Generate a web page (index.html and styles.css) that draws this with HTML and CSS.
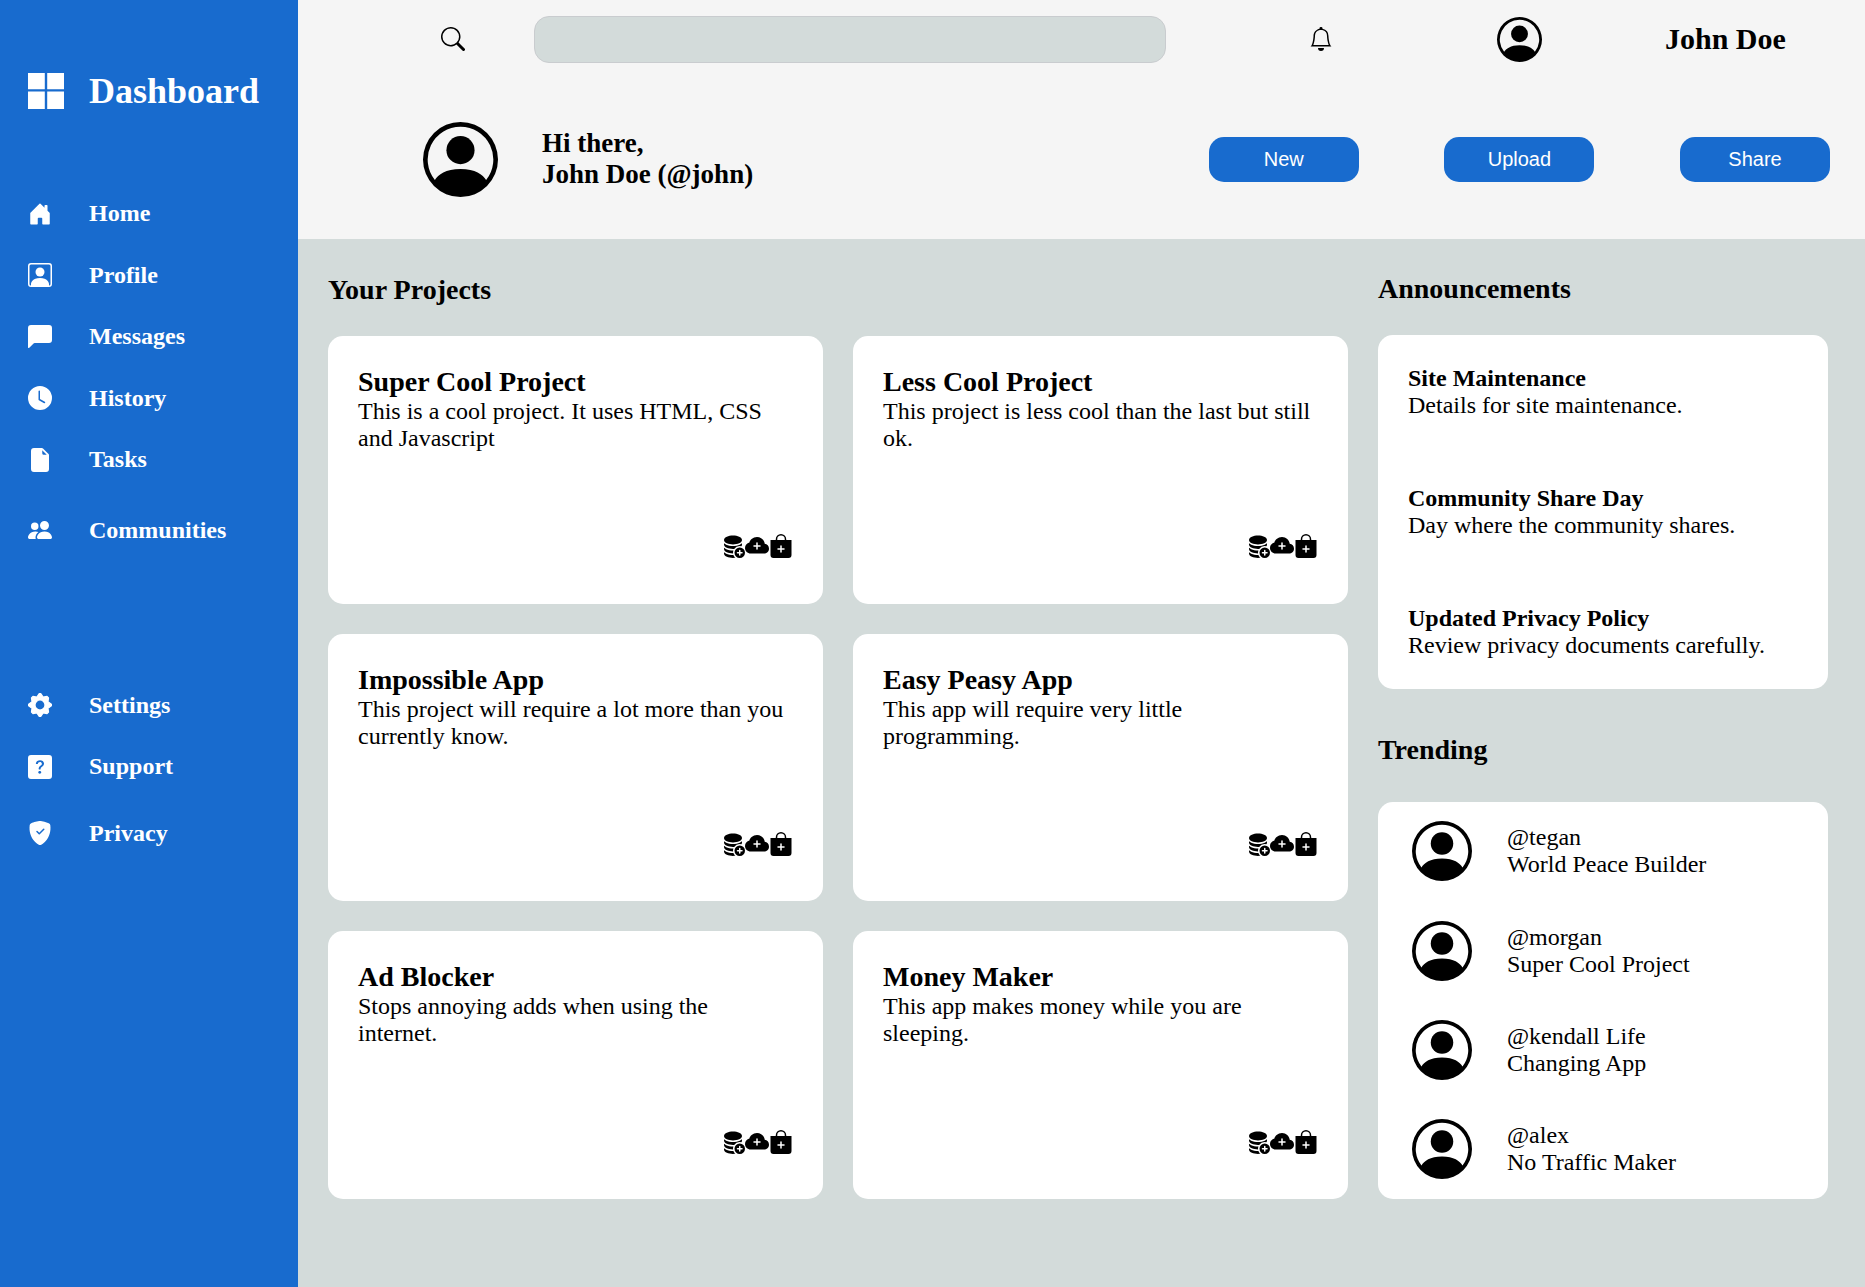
FILE: index.html
```html
<!DOCTYPE html>
<html lang="en">
<head>
<meta charset="utf-8">
<title>Dashboard</title>
<link rel="stylesheet" href="styles.css">
</head>
<body>
<svg class="sprite" aria-hidden="true">
  <symbol id="grid" viewBox="0 0 16 16"><path d="M7.462 0H0v7.19h7.462V0zM16 0H8.538v7.19H16V0zM7.462 8.211H0V16h7.462V8.211zm8.538 0H8.538V16H16V8.211z"/></symbol>
  <symbol id="house" viewBox="0 0 16 16"><path d="M6.5 14.5v-3.505c0-.245.25-.495.5-.495h2c.25 0 .5.25.5.5v3.5a.5.5 0 0 0 .5.5h4a.5.5 0 0 0 .5-.5v-7a.5.5 0 0 0-.146-.354L13 5.793V2.5a.5.5 0 0 0-.5-.5h-1a.5.5 0 0 0-.5.5v1.293L8.354 1.146a.5.5 0 0 0-.708 0l-6 6A.5.5 0 0 0 1.5 7.5v7a.5.5 0 0 0 .5.5h4a.5.5 0 0 0 .5-.5Z"/></symbol>
  <symbol id="profile" viewBox="0 0 16 16"><path d="M11 6a3 3 0 1 1-6 0 3 3 0 0 1 6 0z"/><path d="M2 0a2 2 0 0 0-2 2v12a2 2 0 0 0 2 2h12a2 2 0 0 0 2-2V2a2 2 0 0 0-2-2H2zm12 1a1 1 0 0 1 1 1v12a1 1 0 0 1-1 1v-1c0-1-1-4-6-4s-6 3-6 4v1a1 1 0 0 1-1-1V2a1 1 0 0 1 1-1h12z"/></symbol>
  <symbol id="chat" viewBox="0 0 16 16"><path d="M2 0a2 2 0 0 0-2 2v12.793a.5.5 0 0 0 .854.353l2.853-2.853A1 1 0 0 1 4.414 12H14a2 2 0 0 0 2-2V2a2 2 0 0 0-2-2H2z"/></symbol>
  <symbol id="clock" viewBox="0 0 16 16"><path d="M16 8A8 8 0 1 1 0 8a8 8 0 0 1 16 0zM8 3.5a.5.5 0 0 0-1 0V9a.5.5 0 0 0 .252.434l3.5 2a.5.5 0 0 0 .496-.868L8 8.71V3.5z"/></symbol>
  <symbol id="file" viewBox="0 0 16 16"><path d="M4 0h5.293A1 1 0 0 1 10 .293L13.707 4a1 1 0 0 1 .293.707V14a2 2 0 0 1-2 2H4a2 2 0 0 1-2-2V2a2 2 0 0 1 2-2zm5.5 1.5v2a1 1 0 0 0 1 1h2l-3-3z"/></symbol>
  <symbol id="people" viewBox="0 0 16 16"><path d="M7 14s-1 0-1-1 1-4 5-4 5 3 5 4-1 1-1 1H7Zm4-6a3 3 0 1 0 0-6 3 3 0 0 0 0 6Zm-5.784 6A2.238 2.238 0 0 1 5 13c0-1.355.68-2.75 1.936-3.72A6.325 6.325 0 0 0 5 9c-4 0-5 3-5 4s1 1 1 1h4.216ZM4.5 8a2.5 2.5 0 1 0 0-5 2.5 2.5 0 0 0 0 5Z"/></symbol>
  <symbol id="gear" viewBox="0 0 16 16"><path fill-rule="evenodd" stroke="currentColor" stroke-width=".8" stroke-linejoin="round" d="M7.5.4h1L10.1 2.7l2.6-.4 1 1-.4 2.6L15.6 7.5v1L13.3 10.1l.4 2.6-1 1-2.6-.4L8.5 15.6h-1L5.9 13.3l-2.6.4-1-1 .4-2.6L.4 8.5v-1L2.7 5.9l-.4-2.6 1-1 2.6.4ZM8 4.67a3.33 3.33 0 1 0 0 6.66 3.33 3.33 0 0 0 0-6.66Z"/></symbol>
  <symbol id="question" viewBox="0 0 16 16"><path d="M2 0a2 2 0 0 0-2 2v12a2 2 0 0 0 2 2h12a2 2 0 0 0 2-2V2a2 2 0 0 0-2-2H2zm3.496 6.033a.237.237 0 0 1-.24-.247C5.35 4.091 6.737 3.5 8.005 3.5c1.396 0 2.672.73 2.672 2.24 0 1.08-.635 1.594-1.244 2.057-.737.559-1.01.768-1.01 1.486v.105a.25.25 0 0 1-.25.25h-.81a.25.25 0 0 1-.25-.246l-.004-.217c-.038-.927.495-1.498 1.168-1.987.59-.444.965-.736.965-1.371 0-.825-.628-1.168-1.314-1.168-.803 0-1.253.478-1.342 1.134-.018.137-.128.25-.266.25h-.825zm2.325 6.443c-.584 0-1.009-.394-1.009-.927 0-.552.425-.94 1.01-.94.609 0 1.028.388 1.028.94 0 .533-.42.927-1.029.927z"/></symbol>
  <symbol id="shield" viewBox="0 0 16 16"><path d="M8 0c-.69 0-1.843.265-2.928.56-1.11.3-2.229.655-2.887.87a1.54 1.54 0 0 0-1.044 1.262c-.596 4.477.787 7.795 2.465 9.99a11.777 11.777 0 0 0 2.517 2.453c.386.273.744.482 1.048.625.28.132.581.24.829.24s.548-.108.829-.24a7.159 7.159 0 0 0 1.048-.625 11.775 11.775 0 0 0 2.517-2.453c1.678-2.195 3.061-5.513 2.465-9.99a1.541 1.541 0 0 0-1.044-1.263 62.467 62.467 0 0 0-2.887-.87C9.843.266 8.69 0 8 0zm2.146 5.146a.5.5 0 0 1 .708.708l-3 3a.5.5 0 0 1-.708 0l-1.5-1.5a.5.5 0 1 1 .708-.708L7.5 7.793l2.646-2.647z"/></symbol>
  <symbol id="search" viewBox="0 0 16 16"><path d="M11.742 10.344a6.5 6.5 0 1 0-1.397 1.398h-.001c.03.04.062.078.098.115l3.85 3.85a1 1 0 0 0 1.415-1.414l-3.85-3.85a1.007 1.007 0 0 0-.115-.1zM12 6.5a5.5 5.5 0 1 1-11 0 5.5 5.5 0 0 1 11 0z"/></symbol>
  <symbol id="bell" viewBox="0 0 16 16"><path d="M8 16a2 2 0 0 0 2-2H6a2 2 0 0 0 2 2zM8 1.918l-.797.161A4.002 4.002 0 0 0 4 6c0 .628-.134 2.197-.459 3.742-.16.767-.376 1.566-.663 2.258h10.244c-.287-.692-.502-1.49-.663-2.258C12.134 8.197 12 6.628 12 6a4.002 4.002 0 0 0-3.203-3.92L8 1.917zM14.22 12c.223.447.481.801.78 1H1c.299-.199.557-.553.78-1C2.68 10.2 3 6.88 3 6c0-2.42 1.72-4.44 4.005-4.901a1 1 0 1 1 1.99 0A5.002 5.002 0 0 1 13 6c0 .88.32 4.2 1.22 6z"/></symbol>
  <symbol id="avatar" viewBox="0 0 16 16"><path d="M11 6a3 3 0 1 1-6 0 3 3 0 0 1 6 0z"/><path fill-rule="evenodd" d="M0 8a8 8 0 1 1 16 0A8 8 0 0 1 0 8zm8-7a7 7 0 0 0-5.468 11.37C3.242 11.226 4.805 10 8 10s4.757 1.225 5.468 2.37A7 7 0 0 0 8 1z"/></symbol>
  <symbol id="database" viewBox="0 0 16 16"><path d="M12.5 16a3.5 3.5 0 1 0 0-7 3.5 3.5 0 0 0 0 7Zm.5-5v1h1a.5.5 0 0 1 0 1h-1v1a.5.5 0 0 1-1 0v-1h-1a.5.5 0 0 1 0-1h1v-1a.5.5 0 0 1 1 0ZM8 1c-1.573 0-3.022.289-4.096.777C2.875 2.245 2 2.993 2 4s.875 1.755 1.904 2.223C4.978 6.711 6.427 7 8 7s3.022-.289 4.096-.777C13.125 5.755 14 5.007 14 4s-.875-1.755-1.904-2.223C11.022 1.289 9.573 1 8 1Z"/><path d="M2 7v-.839c.457.432 1.004.751 1.49.972C4.722 7.693 6.318 8 8 8s3.278-.307 4.51-.867c.486-.22 1.033-.54 1.49-.972V7c0 .424-.155.802-.411 1.133a4.51 4.51 0 0 0-4.815 1.843A12.31 12.31 0 0 1 8 10c-1.573 0-3.022-.289-4.096-.777C2.875 8.755 2 8.007 2 7Zm6.257 3.998L8 11c-1.682 0-3.278-.307-4.51-.867-.486-.22-1.033-.54-1.49-.972V10c0 1.007.875 1.755 1.904 2.223C4.978 12.711 6.427 13 8 13h.027a4.552 4.552 0 0 1 .23-2.002Zm-.002 3L8 14c-1.682 0-3.278-.307-4.51-.867-.486-.22-1.033-.54-1.49-.972V13c0 1.007.875 1.755 1.904 2.223C4.978 15.711 6.427 16 8 16c.536 0 1.058-.034 1.555-.097a4.507 4.507 0 0 1-1.3-1.905Z"/></symbol>
  <symbol id="cloud" viewBox="0 0 16 16"><path d="M8 2a5.53 5.53 0 0 0-3.594 1.342c-.766.66-1.321 1.52-1.464 2.383C1.266 6.095 0 7.555 0 9.318 0 11.366 1.708 13 3.781 13h8.906C14.502 13 16 11.57 16 9.773c0-1.636-1.242-2.969-2.834-3.194C12.923 3.999 10.69 2 8 2zm.5 4v1.5H10a.5.5 0 0 1 0 1H8.5V10a.5.5 0 0 1-1 0V8.5H6a.5.5 0 0 1 0-1h1.5V6a.5.5 0 0 1 1 0z"/></symbol>
  <symbol id="bag" viewBox="0 0 16 16"><path fill-rule="evenodd" d="M10.5 3.5a2.5 2.5 0 0 0-5 0V4h5v-.5zm1 0V4H15v10a2 2 0 0 1-2 2H3a2 2 0 0 1-2-2V4h3.5v-.5a3.5 3.5 0 1 1 7 0zM8.5 8a.5.5 0 0 0-1 0v1.5H6a.5.5 0 0 0 0 1h1.5V12a.5.5 0 0 0 1 0v-1.5H10a.5.5 0 0 0 0-1H8.5V8z"/></symbol>
</svg>

<div class="page">
  <aside class="sidebar">
    <div class="brand"><svg class="icon-brand"><use href="#grid"/></svg><h1>Dashboard</h1></div>
    <nav class="menu">
      <a class="menu-item"><svg class="icon"><use href="#house"/></svg>Home</a>
      <a class="menu-item"><svg class="icon"><use href="#profile"/></svg>Profile</a>
      <a class="menu-item"><svg class="icon"><use href="#chat"/></svg>Messages</a>
      <a class="menu-item"><svg class="icon"><use href="#clock"/></svg>History</a>
      <a class="menu-item"><svg class="icon"><use href="#file"/></svg>Tasks</a>
      <a class="menu-item menu-item-communities"><svg class="icon"><use href="#people"/></svg>Communities</a>
    </nav>
    <nav class="menu menu-secondary">
      <a class="menu-item"><svg class="icon"><use href="#gear"/></svg>Settings</a>
      <a class="menu-item"><svg class="icon"><use href="#question"/></svg>Support</a>
      <a class="menu-item menu-item-privacy"><svg class="icon"><use href="#shield"/></svg>Privacy</a>
    </nav>
  </aside>

  <header class="header">
    <div class="topbar">
      <svg class="icon"><use href="#search"/></svg>
      <input class="search" type="text" aria-label="Search">
      <svg class="icon bell"><use href="#bell"/></svg>
      <svg class="avatar-small"><use href="#avatar"/></svg>
      <p class="username">John Doe</p>
    </div>
    <div class="welcome">
      <svg class="avatar-large"><use href="#avatar"/></svg>
      <p class="greeting">Hi there,<br>John Doe (@john)</p>
      <div class="actions">
        <button class="button">New</button>
        <button class="button">Upload</button>
        <button class="button">Share</button>
      </div>
    </div>
  </header>

  <main class="content">
    <section class="projects">
      <h2 class="heading">Your Projects</h2>
      <div class="project-grid">
        <article class="card project">
          <h3>Super Cool Project</h3>
          <p>This is a cool project. It uses HTML, CSS and Javascript</p>
          <div class="tools"><svg class="icon"><use href="#database"/></svg><svg class="icon"><use href="#cloud"/></svg><svg class="icon"><use href="#bag"/></svg></div>
        </article>
        <article class="card project">
          <h3>Less Cool Project</h3>
          <p>This project is less cool than the last but still ok.</p>
          <div class="tools"><svg class="icon"><use href="#database"/></svg><svg class="icon"><use href="#cloud"/></svg><svg class="icon"><use href="#bag"/></svg></div>
        </article>
        <article class="card project">
          <h3>Impossible App</h3>
          <p>This project will require a lot more than you currently know.</p>
          <div class="tools"><svg class="icon"><use href="#database"/></svg><svg class="icon"><use href="#cloud"/></svg><svg class="icon"><use href="#bag"/></svg></div>
        </article>
        <article class="card project">
          <h3>Easy Peasy App</h3>
          <p>This app will require very little programming.</p>
          <div class="tools"><svg class="icon"><use href="#database"/></svg><svg class="icon"><use href="#cloud"/></svg><svg class="icon"><use href="#bag"/></svg></div>
        </article>
        <article class="card project">
          <h3>Ad Blocker</h3>
          <p>Stops annoying adds when using the internet.</p>
          <div class="tools"><svg class="icon"><use href="#database"/></svg><svg class="icon"><use href="#cloud"/></svg><svg class="icon"><use href="#bag"/></svg></div>
        </article>
        <article class="card project">
          <h3>Money Maker</h3>
          <p>This app makes money while you are sleeping.</p>
          <div class="tools"><svg class="icon"><use href="#database"/></svg><svg class="icon"><use href="#cloud"/></svg><svg class="icon"><use href="#bag"/></svg></div>
        </article>
      </div>
    </section>

    <div class="side">
      <section>
        <h2 class="heading heading-announcements">Announcements</h2>
        <div class="card announcements">
          <div><h4>Site Maintenance</h4><p>Details for site maintenance.</p></div>
          <div><h4>Community Share Day</h4><p>Day where the community shares.</p></div>
          <div><h4>Updated Privacy Policy</h4><p>Review privacy documents carefully.</p></div>
        </div>
      </section>
      <section>
        <h2 class="heading heading-trending">Trending</h2>
        <div class="card trending">
          <div class="person"><svg class="avatar-medium"><use href="#avatar"/></svg><p>@tegan<br>World Peace Builder</p></div>
          <div class="person"><svg class="avatar-medium"><use href="#avatar"/></svg><p>@morgan<br>Super Cool Project</p></div>
          <div class="person"><svg class="avatar-medium"><use href="#avatar"/></svg><p>@kendall Life<br>Changing App</p></div>
          <div class="person"><svg class="avatar-medium"><use href="#avatar"/></svg><p>@alex<br>No Traffic Maker</p></div>
        </div>
      </section>
    </div>
  </main>
</div>
</body>
</html>
```
FILE: styles.css
```css
* {
  box-sizing: border-box;
  margin: 0;
  padding: 0;
}

body {
  font: 24px/27px "Liberation Serif", "Times New Roman", serif;
  color: #000;
}

svg {
  display: block;
  flex: none;
  fill: currentColor;
}

.sprite {
  display: none;
}

.icon {
  width: 24px;
  height: 24px;
}

.page {
  display: grid;
  grid-template-columns: 298px 1fr;
  grid-template-rows: 239px 1fr;
  height: 1287px;
}

/* Sidebar */
.sidebar {
  grid-row: 1 / 3;
  padding: 60px 28px 0;
  background: #186bce;
  color: #fff;
}

.brand {
  display: flex;
  align-items: center;
  gap: 25px;
  height: 62px;
  margin-bottom: 61px;
}

.brand h1 {
  font-size: 36px;
  line-height: 42px;
}

.icon-brand {
  width: 36px;
  height: 36px;
}

.menu-item {
  display: flex;
  align-items: center;
  gap: 37px;
  height: 61.5px;
  font-weight: bold;
}

.menu-item-communities {
  height: 79px;
}

.menu-secondary {
  margin-top: 105px;
}

.menu-item-privacy {
  height: 71px;
}

/* Header */
.header {
  background: #f5f5f5;
}

.topbar {
  display: flex;
  align-items: center;
  height: 78px;
  padding-left: 143px;
}

.search {
  width: 632px;
  height: 47px;
  margin-top: 1px;
  margin-left: 69px;
  border: 1px solid #c9cccf;
  border-radius: 15px;
  background: #d3dbda;
}

.bell {
  margin-left: 143px;
}

.avatar-small {
  width: 45px;
  height: 45px;
  margin-top: 1px;
  margin-left: 164px;
}

.username {
  margin-left: 123px;
  font-size: 30px;
  font-weight: bold;
  line-height: 34px;
}

.welcome {
  display: flex;
  align-items: center;
  height: 161px;
  padding: 2px 35px 0 125px;
}

.avatar-large {
  width: 75px;
  height: 75px;
}

.greeting {
  margin: 0 0 1px 44px;
  font-size: 27px;
  font-weight: bold;
  line-height: 31px;
}

.actions {
  display: flex;
  gap: 85.6px;
  margin-left: auto;
}

.button {
  width: 150px;
  height: 45px;
  border: 0;
  border-radius: 15px;
  background: #186bce;
  color: #fff;
  font: 20px "Liberation Sans", Arial, sans-serif;
}

/* Content */
.content {
  display: grid;
  grid-template-columns: 1020px 450px;
  gap: 30px;
  padding-left: 30px;
  background: #d3dbda;
}

.heading {
  height: 97px;
  padding-top: 35px;
  font-size: 28px;
  line-height: 32px;
}

.heading-announcements {
  height: 96px;
  padding-top: 34px;
}

.heading-trending {
  height: 113px;
  padding-top: 45px;
}

.card {
  border-radius: 15px;
  background: #fff;
}

.project-grid {
  display: grid;
  grid-template-columns: 1fr 1fr;
  grid-template-rows: repeat(3, 1fr);
  gap: 30px;
  height: 863px;
}

.project {
  display: flex;
  flex-direction: column;
  padding: 30px 30px 45.3px;
}

.project h3 {
  font-size: 28px;
  line-height: 32px;
}

.tools {
  display: flex;
  justify-content: flex-end;
  margin-top: auto;
}

.announcements {
  display: flex;
  flex-direction: column;
  justify-content: space-between;
  height: 354px;
  padding: 30px;
}

.announcements h4 {
  font-size: 24px;
}

.trending {
  display: grid;
  grid-template-rows: repeat(4, 1fr);
  height: 397px;
  padding-left: 34px;
}

.person {
  display: flex;
  align-items: center;
  gap: 35px;
  padding-bottom: 0.4px;
}

.avatar-medium {
  width: 60px;
  height: 60px;
}
```
